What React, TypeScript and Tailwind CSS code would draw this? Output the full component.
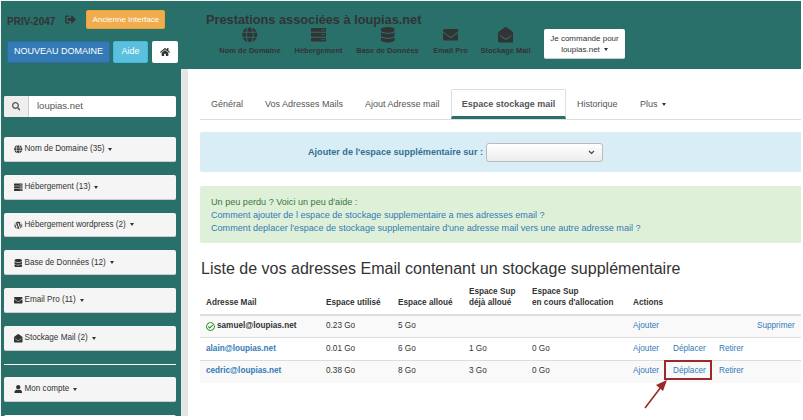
import { FaGlobe, FaServer, FaDatabase, FaEnvelope, FaEnvelopeOpen, FaHome, FaSearch, FaWordpress, FaUser, FaSignOutAlt, FaRegCheckCircle } from "react-icons/fa";
import type { ReactNode } from "react";

const Caret = () => <span className="inline-block w-0 h-0 ml-[4px] align-middle border-x-[2.5px] border-x-transparent border-t-[3px] border-t-[#333]" />;

function TopIcon({ icon, label, w }: { icon: ReactNode; label: string; w: string }) {
  return (
    <div className={`flex flex-col items-center ${w}`}>
      <div className="h-[18px] flex items-center text-[15.5px] text-[#333]">{icon}</div>
      <div className="mt-[2px] text-[7.5px] leading-[10px] font-bold text-[#333] whitespace-nowrap">{label}</div>
    </div>
  );
}

function SideBtn({ icon, label }: { icon: ReactNode; label: string }) {
  return (
    <div className="h-[24.8px] shrink-0 bg-[#f5f5f5] rounded-[2px] border-b border-[#ccc] flex items-center pl-[10px] pt-px text-[8.15px] text-[#333] whitespace-nowrap">
      <span className="flex items-center text-[8.5px] mr-[2px]">{icon}</span>
      <span>{label}</span>
      <Caret />
    </div>
  );
}

const Blue = ({ children }: { children: ReactNode }) => <span className="text-[#337ab7]">{children}</span>;

const rows = [
  { mail: "samuel@loupias.net", used: "0.23 Go", alloc: "5 Go", sup: "", cours: "", ok: true },
  { mail: "alain@loupias.net", used: "0.01 Go", alloc: "6 Go", sup: "1 Go", cours: "0 Go", ok: false },
  { mail: "cedric@loupias.net", used: "0.38 Go", alloc: "8 Go", sup: "3 Go", cours: "0 Go", ok: false },
];

export default function App() {
  return (
    <div className="w-[801px] h-[416px] overflow-hidden bg-[#29706b] border-t border-l border-[#f4f4f4] flex flex-col font-['Liberation_Sans',sans-serif] text-[#333]">
      <header className="h-[68px] shrink-0 flex">
        <div className="w-[180px] shrink-0 pl-[6px]">
          <div className="h-[41px] pt-[9px] flex items-start">
            <span className="mt-[4px] text-[10px] font-bold text-[#333]">PRIV-2047</span>
            <FaSignOutAlt className="mt-[4px] ml-[10px] text-[11px] text-[#333]" />
            <div className="ml-[10px] w-[79px] h-[19px] bg-[#f0ad4e] border border-[#eea236] rounded-[2px] text-white text-[8px] flex items-center justify-center whitespace-nowrap">Ancienne Interface</div>
          </div>
          <div className="-mt-px flex gap-[3px]">
            <div className="w-[103px] h-[22px] bg-[#337ab7] border border-[#2e6da4] rounded-[2px] text-white text-[9px] flex items-center justify-center whitespace-nowrap">NOUVEAU DOMAINE</div>
            <div className="w-[35px] h-[22px] bg-[#5bc0de] border border-[#46b8da] rounded-[2px] text-white text-[9px] flex items-center justify-center">Aide</div>
            <div className="ml-[1px] w-[26px] h-[22px] bg-white rounded-[2px] flex items-center justify-center text-[10px] text-[#333]"><FaHome /></div>
          </div>
        </div>
        <div className="pl-[25px]">
          <div className="mt-[11px] text-[12.75px] leading-[15px] font-bold text-[#333] whitespace-nowrap">Prestations associées à loupias.net</div>
          <div className="-mt-px flex items-start">
            <TopIcon icon={<FaGlobe />} label="Nom de Domaine" w="w-[62px] ml-[13px]" />
            <TopIcon icon={<FaServer />} label="Hébergement" w="w-[49px] ml-[13px]" />
            <TopIcon icon={<FaDatabase />} label="Base de Données" w="w-[63px] ml-[13px]" />
            <TopIcon icon={<FaEnvelope />} label="Email Pro" w="w-[35px] ml-[14px]" />
            <TopIcon icon={<FaEnvelopeOpen />} label="Stockage Mail" w="w-[51px] ml-[12px]" />
            <div className="ml-[13px] mt-[3px] w-[81px] h-[30px] bg-white rounded-[2px] border-b border-[#ccc] text-[8px] leading-[11px] text-[#333] flex flex-col items-center justify-center whitespace-nowrap">
              <span>Je commande pour</span>
              <span>loupias.net<Caret /></span>
            </div>
          </div>
        </div>
      </header>

      <div className="flex-1 flex min-h-0">
        <aside className="w-[180px] shrink-0 pl-[3px] pr-[5px] pt-[27px] flex flex-col">
          <div className="h-[21px] shrink-0 bg-white rounded-[2px] flex text-[9.5px] text-[#555]">
            <div className="w-[25px] bg-[#eee] border-r border-[#ccc] rounded-l-[2px] flex items-center justify-center text-[8.5px]"><FaSearch /></div>
            <div className="flex-1 flex items-center pl-[8px]">loupias.net</div>
          </div>
          <div className="mt-[20px] shrink-0 flex flex-col gap-[13px]">
            <SideBtn icon={<FaGlobe />} label="Nom de Domaine (35)" />
            <SideBtn icon={<FaServer />} label="Hébergement (13)" />
            <SideBtn icon={<FaWordpress />} label="Hébergement wordpress (2)" />
            <SideBtn icon={<FaDatabase />} label="Base de Données (12)" />
            <SideBtn icon={<FaEnvelope />} label="Email Pro (11)" />
            <SideBtn icon={<FaEnvelopeOpen />} label="Stockage Mail (2)" />
          </div>
          <div className="mt-[13px] mb-[12px] h-px shrink-0 bg-white" />
          <div className="shrink-0 flex flex-col gap-[13px]">
            <SideBtn icon={<FaUser />} label="Mon compte" />
            <div className="h-[25px] bg-[#f5f5f5] rounded-[2px]" />
          </div>
        </aside>

        <div className="w-[7px] shrink-0 bg-[#e5e5e5]" />

        <main className="flex-1 min-w-0 bg-white pl-[12px] pt-[20px]">
          <nav className="h-[31px] border-b border-[#ddd] flex text-[9px] text-[#555] whitespace-nowrap">
            <div className="w-[65px] pl-[11px] pt-[9px]">Général</div>
            <div className="w-[100px] pl-0 pt-[9px]">Vos Adresses Mails</div>
            <div className="w-[86px] pt-[9px]">Ajout Adresse mail</div>
            <div className="w-[115px] h-[30px] bg-white border-x border-t border-[#ddd] border-b-[3px] border-b-[#29706b] rounded-t-[2px] font-bold text-[#555] text-center pt-[8px]">Espace stockage mail</div>
            <div className="w-[74px] pl-[11px] pt-[9px]">Historique</div>
            <div className="pl-0 pt-[9px]">Plus<Caret /></div>
          </nav>

          <div className="mt-[12px] h-[40px] bg-[#d9edf7] rounded-l-[2px] flex items-center pl-[108px] text-[9.1px] font-bold text-[#31708f] whitespace-nowrap">
            <span className="pt-px">Ajouter de l'espace supplémentaire sur :</span>
            <div className="ml-[3px] w-[117px] h-[19px] rounded-[3px] border border-[#bbb] bg-gradient-to-b from-white to-[#ececec] flex items-center justify-end pr-[7px]">
              <svg width="7" height="5" viewBox="0 0 7 5"><path d="M1 1l2.5 2.5L6 1" fill="none" stroke="#444" strokeWidth="1.2" /></svg>
            </div>
          </div>

          <div className="mt-[14px] h-[57px] bg-[#dff0d8] rounded-l-[2px] pl-[11px] pt-[10px] text-[9.1px] leading-[13px] whitespace-nowrap">
            <div className="text-[#3c763d]">Un peu perdu ? Voici un peu d'aide :</div>
            <div><Blue>Comment ajouter de l espace de stockage supplementaire a mes adresses email ?</Blue></div>
            <div><Blue>Comment deplacer l'espace de stockage supplementaire d'une adresse mail vers une autre adresse mail ?</Blue></div>
          </div>

          <h1 className="mt-[15px] ml-px text-[16.05px] leading-[20px] font-normal text-[#333] whitespace-nowrap">Liste de vos adresses Email contenant un stockage supplémentaire</h1>

          <table className="mt-[6px] w-[601px] table-fixed border-collapse text-[8.2px] text-[#333] whitespace-nowrap">
            <colgroup>
              <col className="w-[120px]" /><col className="w-[72px]" /><col className="w-[71px]" /><col className="w-[63px]" /><col className="w-[101px]" /><col className="w-[40px]" /><col className="w-[46px]" /><col className="w-[38px]" /><col className="w-[50px]" />
            </colgroup>
            <thead>
              <tr className="h-[31px] border-b-2 border-[#ddd] font-bold text-left align-bottom leading-[11px]">
                <th className="pl-[6px] pb-[6px]">Adresse Mail</th>
                <th className="pl-[6px] pb-[6px]">Espace utilisé</th>
                <th className="pl-[6px] pb-[6px]">Espace alloué</th>
                <th className="pl-[6px] pb-[6px]">Espace Sup<br />déjà alloué</th>
                <th className="pl-[6px] pb-[6px]">Espace Sup<br />en cours d'allocation</th>
                <th className="pl-[6px] pb-[6px]" colSpan={4}>Actions</th>
              </tr>
            </thead>
            <tbody>
              {rows.map((r, i) => (
                <tr key={r.mail} className={`h-[22.5px] border-b border-[#ddd] last:border-b-0 ${i === 1 ? "bg-white" : "bg-[#f9f9f9]"}`}>
                  <td className="pl-[6px] font-bold">
                    {r.ok ? (
                      <span className="flex items-center gap-[2px]"><FaRegCheckCircle className="text-[9px] text-[#0a8a0a]" />{r.mail}</span>
                    ) : <Blue>{r.mail}</Blue>}
                  </td>
                  <td className="pl-[6px]">{r.used}</td>
                  <td className="pl-[6px]">{r.alloc}</td>
                  <td className="pl-[6px]">{r.sup}</td>
                  <td className="pl-[6px]">{r.cours}</td>
                  <td className="pl-[6px]"><Blue>Ajouter</Blue></td>
                  <td className="pl-[6px]">
                    {!r.ok && (
                      <span className="relative">
                        <Blue>Déplacer</Blue>
                        {i === 2 && (
                          <>
                            <span className="absolute -left-[9px] -top-[6px] w-[48px] h-[20px] border-[2px] border-[#9c2a2a]" />
                            <svg className="absolute -left-[30px] top-[12px]" width="30" height="32" viewBox="0 0 30 32">
                              <path d="M2 30 L18 9" stroke="#9c2a2a" strokeWidth="1.6" fill="none" />
                              <path d="M24 2 L13 7 L20 13 Z" fill="#9c2a2a" />
                            </svg>
                          </>
                        )}
                      </span>
                    )}
                  </td>
                  <td className="pl-[6px]">{!r.ok && <Blue>Retirer</Blue>}</td>
                  <td className="pl-[6px]">{r.ok && <Blue>Supprimer</Blue>}</td>
                </tr>
              ))}
            </tbody>
          </table>
        </main>
      </div>
    </div>
  );
}
